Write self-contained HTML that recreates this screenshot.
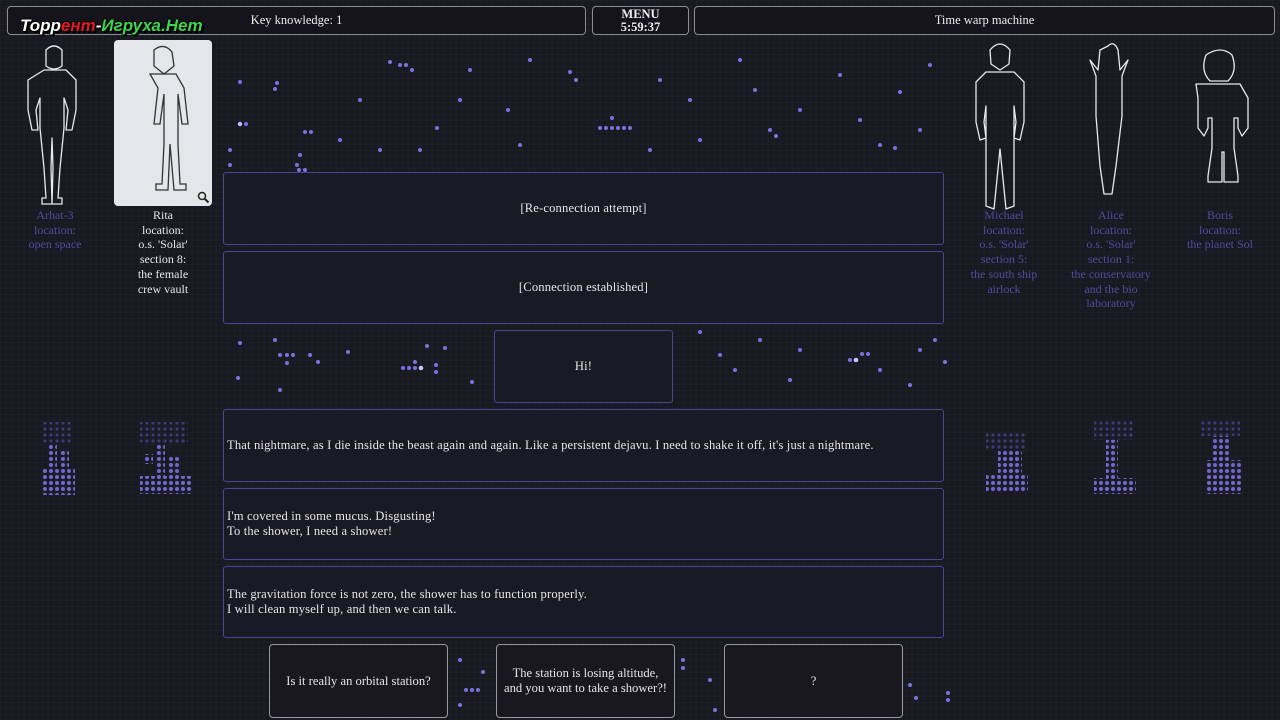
<!DOCTYPE html>
<html><head><meta charset="utf-8"><style>
*{margin:0;padding:0;box-sizing:border-box}
body{width:1280px;height:720px;overflow:hidden;background:#191922;font-family:"Liberation Serif",serif;color:#e6e6ea;position:relative;
background-image:linear-gradient(rgba(255,255,255,0.015) 1px,transparent 1px),linear-gradient(90deg,rgba(255,255,255,0.015) 1px,transparent 1px);background-size:6px 6px}
.a{position:absolute}
.top{position:absolute;border:1.5px solid #8d8c97;border-radius:4px;background:#15141c;font-size:12.5px;text-align:center;color:#eee}
.box{position:absolute;left:223px;width:721px;border:1px solid #4a4690;border-radius:3px;background:#1a1926;font-size:12.6px;letter-spacing:0.15px;display:flex;align-items:center}
.box.c{justify-content:center}
.btn{position:absolute;top:644px;height:74px;width:179px;border:1.5px solid #9a99a3;border-radius:4px;background:#19181f;font-size:12.6px;display:flex;align-items:center;justify-content:center;text-align:center;line-height:15px}
.lbl{position:absolute;font-size:12px;text-align:center;line-height:14.7px;color:#4f4b9e}
.lbl.w{color:#e6e6ea}
</style></head><body>
<svg class="a" style="left:0;top:0" width="1280" height="720">
<defs>
<pattern id="p" width="6" height="6" patternUnits="userSpaceOnUse"><circle cx="3" cy="3" r="2" fill="#6f68d0"/></pattern>
<pattern id="q" width="6" height="6" patternUnits="userSpaceOnUse"><circle cx="3" cy="3" r="1.6" fill="#3d3a78"/></pattern>
</defs>
<g fill="#7a72e0">
<circle cx="240" cy="82" r="2"/><circle cx="275" cy="89" r="2"/><circle cx="277" cy="83" r="2"/><circle cx="240" cy="124" r="2.2" fill="#c0bcff"/><circle cx="246" cy="124" r="2"/><circle cx="305" cy="132" r="2"/><circle cx="311" cy="132" r="2"/><circle cx="297" cy="165" r="2"/><circle cx="299" cy="170" r="2"/><circle cx="305" cy="170" r="2"/>
<circle cx="390" cy="62" r="2"/><circle cx="400" cy="65" r="2"/><circle cx="406" cy="65" r="2"/><circle cx="412" cy="70" r="2"/><circle cx="437" cy="128" r="2"/><circle cx="460" cy="100" r="2"/><circle cx="470" cy="70" r="2"/><circle cx="508" cy="110" r="2"/><circle cx="520" cy="145" r="2"/>
<circle cx="570" cy="72" r="2"/><circle cx="576" cy="80" r="2"/><circle cx="600" cy="128" r="2"/><circle cx="606" cy="128" r="2"/><circle cx="612" cy="128" r="2"/><circle cx="618" cy="128" r="2"/><circle cx="624" cy="128" r="2"/><circle cx="630" cy="128" r="2"/><circle cx="612" cy="118" r="2"/><circle cx="660" cy="80" r="2"/><circle cx="690" cy="100" r="2"/><circle cx="700" cy="140" r="2"/><circle cx="740" cy="60" r="2"/><circle cx="755" cy="90" r="2"/><circle cx="770" cy="130" r="2"/><circle cx="776" cy="136" r="2"/><circle cx="800" cy="110" r="2"/><circle cx="840" cy="75" r="2"/><circle cx="860" cy="120" r="2"/><circle cx="880" cy="145" r="2"/><circle cx="895" cy="148" r="2"/><circle cx="900" cy="92" r="2"/><circle cx="930" cy="65" r="2"/><circle cx="920" cy="130" r="2"/>
<circle cx="300" cy="155" r="2"/><circle cx="340" cy="140" r="2"/><circle cx="360" cy="100" r="2"/><circle cx="380" cy="150" r="2"/><circle cx="420" cy="150" r="2"/><circle cx="530" cy="60" r="2"/><circle cx="650" cy="150" r="2"/>
<circle cx="280" cy="355" r="2"/><circle cx="287" cy="355" r="2"/><circle cx="293" cy="355" r="2"/><circle cx="287" cy="363" r="2"/><circle cx="275" cy="340" r="2"/><circle cx="310" cy="355" r="2"/><circle cx="318" cy="362" r="2"/><circle cx="348" cy="352" r="2"/><circle cx="403" cy="368" r="2"/><circle cx="409" cy="368" r="2"/><circle cx="415" cy="368" r="2"/><circle cx="421" cy="368" r="2.3" fill="#c8c4ff"/><circle cx="415" cy="362" r="2"/><circle cx="436" cy="372" r="2"/><circle cx="436" cy="365" r="2"/><circle cx="427" cy="346" r="2"/><circle cx="445" cy="348" r="2"/><circle cx="280" cy="390" r="2"/><circle cx="238" cy="378" r="2"/><circle cx="472" cy="382" r="2"/><circle cx="240" cy="343" r="2"/>
<circle cx="700" cy="332" r="2"/><circle cx="720" cy="355" r="2"/><circle cx="735" cy="370" r="2"/><circle cx="760" cy="340" r="2"/><circle cx="790" cy="380" r="2"/><circle cx="800" cy="350" r="2"/><circle cx="850" cy="360" r="2"/><circle cx="856" cy="360" r="2.3" fill="#c8c4ff"/><circle cx="862" cy="354" r="2"/><circle cx="868" cy="354" r="2"/><circle cx="880" cy="370" r="2"/><circle cx="910" cy="385" r="2"/><circle cx="920" cy="350" r="2"/><circle cx="935" cy="340" r="2"/><circle cx="945" cy="362" r="2"/>
<circle cx="460" cy="660" r="2"/><circle cx="466" cy="690" r="2"/><circle cx="472" cy="690" r="2"/><circle cx="478" cy="690" r="2"/><circle cx="460" cy="705" r="2"/><circle cx="483" cy="672" r="2"/><circle cx="683" cy="660" r="2"/><circle cx="683" cy="668" r="2"/><circle cx="710" cy="680" r="2"/><circle cx="715" cy="710" r="2"/><circle cx="910" cy="685" r="2"/><circle cx="916" cy="698" r="2"/><circle cx="948" cy="693" r="2"/><circle cx="948" cy="700" r="2"/>
<circle cx="230" cy="165" r="2"/><circle cx="230" cy="150" r="2"/>
</g>
<g fill="url(#p)">
<rect x="42" y="468" width="33" height="27"/><rect x="48" y="444" width="9" height="24"/><rect x="60" y="450" width="9" height="18"/>
<rect x="140" y="476" width="51" height="18"/><rect x="156" y="444" width="9" height="32"/><rect x="168" y="456" width="12" height="20"/><rect x="144" y="454" width="9" height="10"/>
<rect x="986" y="474" width="42" height="18"/><rect x="998" y="450" width="24" height="24"/>
<rect x="1094" y="478" width="42" height="16"/><rect x="1106" y="440" width="12" height="38"/>
<rect x="1206" y="460" width="36" height="34"/><rect x="1212" y="436" width="18" height="24"/>
</g>
<g fill="url(#q)">
<rect x="42" y="422" width="30" height="22"/><rect x="140" y="422" width="48" height="22"/><rect x="986" y="432" width="40" height="18"/><rect x="1094" y="420" width="40" height="20"/><rect x="1200" y="420" width="40" height="16"/>
</g>
<g fill="none" stroke="#e8e8ef" stroke-width="1.3" stroke-linejoin="round">
<path d="M46 50 q8-8 16 0 v16 q-8 6-16 0z M44 70 h22 l10 10 v30 l-4 20 h-6 l2-20 -4-12 v30 l-4 40 -2 30 h4 v6 h-10 l1-36 -1-30 -1 30 1 36 h-10 v-6 h4 l-2-30 -4-40 v-30 l-4 12 2 20 h-6 l-4-20 v-30z"/>
<path d="M990 50 q10-12 20 0 l-1 14 -9 6 -9-6z M986 72 h28 l10 10 v40 l-4 18 -6-2 2-16 -2-16 v100 l-8 3 -6-60 -6 60 -8-3 v-100 l-2 16 2 16 -6 2 -4-18 v-40z"/>
<path d="M1108 46 q6-6 10 4 l2 20 8-10 -6 16 v40 l-6 50 -4 28 h-8 l-4-28 -4-50 v-40 l-6-16 8 10 2-20z"/>
<path d="M1206 55 q15-10 26 0 q6 16-4 26 h-18 q-10-10-4-26z M1196 84 h44 l8 14 v30 l-6 8 -4-8 v-10 l-4 0 v30 l4 28 v6 h-14 v-30 l-2 0 v30 h-14 v-6 l4-28 v-30 h-4 v10 l-4 8 -6-8 v-30z"/>
</g>
</svg>

<div class="top" style="left:7px;top:6px;width:579px;height:29px;line-height:26px">Key knowledge: 1</div>
<div class="a" style="left:20px;top:16px;font-family:'Liberation Sans',sans-serif;font-weight:bold;font-style:italic;font-size:17px;color:#fff;text-shadow:-1px 0 #000,1px 0 #000,0 -1px #000,0 1px #000,2px 2px #000">Торр<span style="color:#e8181e">ент</span>-<span style="color:#3cd84a">Игруха.Нет</span></div>
<div class="top" style="left:592px;top:6px;width:97px;height:29px;line-height:13px;padding-top:1px;font-weight:bold">MENU<br>5:59:37</div>
<div class="top" style="left:694px;top:6px;width:581px;height:29px;line-height:26px">Time warp machine</div>

<div class="a" style="left:114px;top:40px;width:98px;height:166px;background:#e4e6ea;border-radius:4px">
<svg width="98" height="166"><g fill="none" stroke="#333" stroke-width="1.3"><path d="M40 10 q10-8 18 2 l2 14 -10 8 -10-8z M36 34 h26 l8 14 4 36 h-6 l-4-30 v50 l2 40 h6 v6 h-12 l-4-46 -2 46 h-12 v-6 h6 l2-40 v-50 l-4 30 h-6 l4-36z"/></g>
<circle cx="88" cy="156" r="3.5" fill="none" stroke="#222" stroke-width="1.5"/><path d="M90.5 158.5 l4 4" stroke="#222" stroke-width="2"/></svg></div>

<div class="lbl" style="left:10px;top:208px;width:90px">Arhat-3<br>location:<br>open space</div>
<div class="lbl w" style="left:113px;top:208px;width:100px">Rita<br>location:<br>o.s. 'Solar'<br>section 8:<br>the female<br>crew vault</div>
<div class="lbl" style="left:954px;top:208px;width:100px">Michael<br>location:<br>o.s. 'Solar'<br>section 5:<br>the south ship<br>airlock</div>
<div class="lbl" style="left:1056px;top:208px;width:110px">Alice<br>location:<br>o.s. 'Solar'<br>section 1:<br>the conservatory<br>and the bio<br>laboratory</div>
<div class="lbl" style="left:1170px;top:208px;width:100px">Boris<br>location:<br>the planet Sol</div>

<div class="box c" style="top:172px;height:73px">[Re-connection attempt]</div>
<div class="box c" style="top:251px;height:73px">[Connection established]</div>
<div class="box c" style="top:330px;height:73px;left:494px;width:179px">Hi!</div>
<div class="box" style="top:409px;height:73px;padding-left:3px">That nightmare, as I die inside the beast again and again. Like a persistent dejavu. I need to shake it off, it's just a nightmare.</div>
<div class="box" style="top:488px;height:72px;padding-left:3px;line-height:15px">I'm covered in some mucus. Disgusting!<br>To the shower, I need a shower!</div>
<div class="box" style="top:566px;height:72px;padding-left:3px;line-height:15px">The gravitation force is not zero, the shower has to function properly.<br>I will clean myself up, and then we can talk.</div>

<div class="btn" style="left:269px">Is it really an orbital station?</div>
<div class="btn" style="left:496px">The station is losing altitude,<br>and you want to take a shower?!</div>
<div class="btn" style="left:724px">?</div>
</body></html>
